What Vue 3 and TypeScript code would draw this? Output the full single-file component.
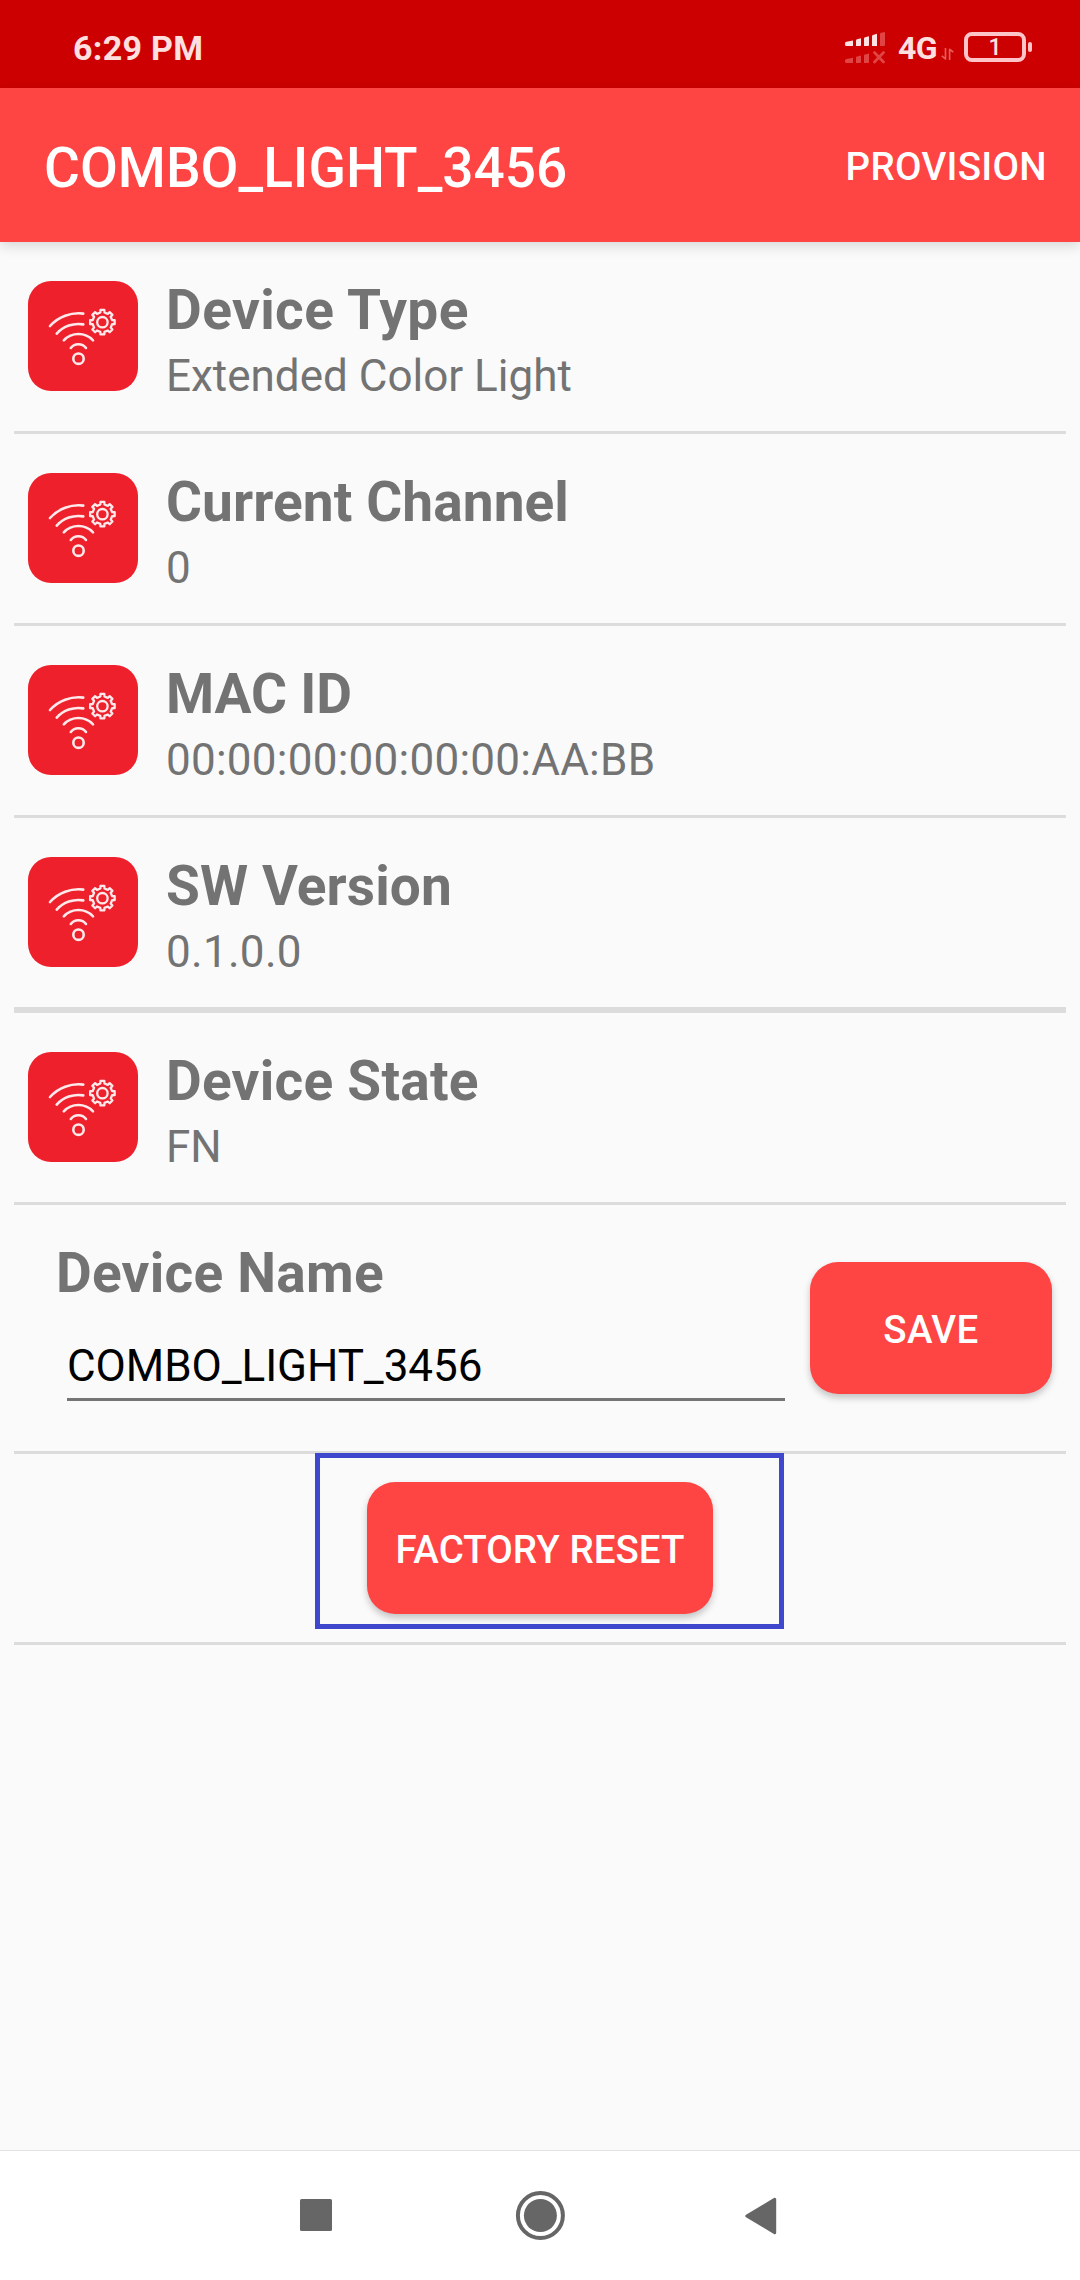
<script setup lang="ts">
import { ref } from 'vue'

interface InfoRow {
  label: string
  value: string
  labelSpacing: number
  valueSpacing: number
  thick?: boolean
}

const rows: InfoRow[] = [
  { label: 'Device Type', value: 'Extended Color Light', labelSpacing: 0.4, valueSpacing: 0 },
  { label: 'Current Channel', value: '0', labelSpacing: 0.1, valueSpacing: 0 },
  { label: 'MAC ID', value: '00:00:00:00:00:00:AA:BB', labelSpacing: -0.1, valueSpacing: 0.25 },
  { label: 'SW Version', value: '0.1.0.0', labelSpacing: 0.1, valueSpacing: 0.3, thick: true },
  { label: 'Device State', value: 'FN', labelSpacing: 0.25, valueSpacing: 0 },
]

const deviceName = ref('COMBO_LIGHT_3456')

// Outline of an eight-toothed gear around (cx, cy).
function gearPath(cx: number, cy: number, inner: number, outer: number): string {
  const points: string[] = []
  for (let i = 0; i < 8; i++) {
    const mid = i * 45
    const corners: [number, number][] = [
      [mid - 12, inner],
      [mid - 9, outer],
      [mid + 9, outer],
      [mid + 12, inner],
    ]
    for (const [deg, r] of corners) {
      const a = (deg * Math.PI) / 180
      points.push(`${(cx + r * Math.cos(a)).toFixed(2)} ${(cy + r * Math.sin(a)).toFixed(2)}`)
    }
  }
  return `M${points.join('L')}Z`
}

const gear = gearPath(74.4, 41.2, 9.9, 12.4)
</script>

<template>
  <div class="screen">
    <div class="status">
      <span class="clock">6:29 PM</span>
      <div class="indicators">
        <svg class="signal" width="40" height="32" viewBox="0 0 40 32">
          <g fill="#ffe3e3">
            <path d="M0 11.5Q0 10 1.500 9.700L8 8.500V14H1.500Q0 14 0 12.500Z" />
            <path d="M11 8.300Q11 7.500 12 7.200L16 6.200V13Q16 14 15 14H11Z" />
            <path d="M19 6.300Q19 5.500 20 5.200L24 4.200V13Q24 14 23 14H19Z" />
            <path d="M27 4Q27 3.200 28 2.900L32 1.800V14H27Z" />
          </g>
          <g fill="#e04444">
            <path d="M35 2Q35 1 36 .8L40 0V13Q40 14 39 14H35Z" />
            <path d="M0 28.500Q0 27.200 1.500 27L8 25.800V31H1.500Q0 31 0 29.500Z" />
            <path d="M11 25.500Q11 24.700 12 24.500L16 23.500V30Q16 31 15 31H11Z" />
            <path d="M19 23.500Q19 22.700 20 22.500L24 21.500V30Q24 31 23 31H19Z" />
          </g>
          <path d="M29.500 20.500L38.500 30M38.500 20.500L29.500 30" stroke="#e04444" stroke-width="2.8" stroke-linecap="round" />
        </svg>
        <span class="network">4G</span>
        <svg class="transfer" width="13" height="14" viewBox="0 0 13 14" fill="none" stroke="#e85c5c" stroke-width="1.700">
          <path d="M4.500 1V12M5 12.300L.8 8.800M8.600 13V2M8.200 2L12.300 5.200" />
        </svg>
        <div class="battery">1</div>
        <i class="nub"></i>
      </div>
    </div>

    <header class="bar">
      <h1>COMBO_LIGHT_3456</h1>
      <span class="action">PROVISION</span>
    </header>

    <main class="content">
      <section v-for="row in rows" :key="row.label" class="row" :class="{ thick: row.thick }">
        <svg class="tile" width="110" height="110" viewBox="0 0 110 110">
          <rect width="110" height="110" rx="23" fill="#ee202c" />
          <g fill="none" stroke="#ffe9ea" stroke-width="2.600" stroke-linecap="round">
            <path d="M22 45A38.700 38.700 0 0 1 55.300 32.600" />
            <path d="M28.700 52.600A28.900 28.900 0 0 1 55.300 43.400" />
            <path d="M35.800 59.400A20 20 0 0 1 65 59.400" />
            <path d="M42.800 67A9.500 9.500 0 0 1 58 67" />
            <circle cx="50.500" cy="77.700" r="5.200" />
            <path :d="gear" stroke-linejoin="round" stroke-width="2.300" />
            <circle cx="74.400" cy="41.200" r="5.200" stroke-width="2.300" />
          </g>
        </svg>
        <div class="texts">
          <div class="label" :style="{ letterSpacing: row.labelSpacing + 'px' }">{{ row.label }}</div>
          <div class="value" :style="{ letterSpacing: row.valueSpacing + 'px' }">{{ row.value }}</div>
        </div>
      </section>

      <section class="row name-row">
        <div class="field">
          <div class="label name-label">Device Name</div>
          <input v-model="deviceName" class="input" type="text" spellcheck="false" />
        </div>
        <button class="btn save">SAVE</button>
      </section>

      <section class="row reset-row">
        <div class="highlight"></div>
        <button class="btn reset">FACTORY RESET</button>
      </section>
    </main>

    <nav class="nav">
      <svg class="recents" width="32" height="32" viewBox="0 0 32 32"><rect width="32" height="32" rx="1.500" fill="#666" /></svg>
      <svg class="home" width="50" height="50" viewBox="0 0 50 50">
        <circle cx="25.400" cy="25.500" r="22.500" fill="none" stroke="#666" stroke-width="4" />
        <circle cx="25.400" cy="25.500" r="16.500" fill="#666" />
      </svg>
      <svg class="back" width="32" height="38" viewBox="0 0 32 38">
        <path d="M1.800 19L29.700 2.300V35.700Z" fill="#666" stroke="#666" stroke-width="3" stroke-linejoin="round" />
      </svg>
    </nav>
  </div>
</template>

<style>
body {
  margin: 0;
}
</style>

<style scoped>
.screen {
  display: flex;
  flex-direction: column;
  width: 1080px;
  height: 2280px;
  overflow: hidden;
  background: #fafafa;
  color: #737373;
  font-family: Roboto, "Liberation Sans", sans-serif;
}
.status {
  display: flex;
  justify-content: space-between;
  height: 88px;
  background: #cc0000;
  color: #ffe0e0;
}
.clock {
  margin: 27px 0 0 73px;
  font-size: 34px;
  line-height: 42px;
  font-weight: 700;
  letter-spacing: 0.3px;
}
.indicators {
  display: flex;
  align-items: flex-start;
  width: 235px;
}
.signal {
  margin-top: 32px;
}
.network {
  width: 39px;
  margin: 29px 0 0 13px;
  font-size: 32px;
  line-height: 38px;
  font-weight: 700;
  letter-spacing: -0.5px;
}
.transfer {
  margin: 47px 0 0 4px;
}
.battery {
  box-sizing: border-box;
  width: 62px;
  height: 30px;
  margin: 32px 0 0 10px;
  border: 4px solid #ffc4c7;
  border-radius: 8px;
  font-size: 23px;
  line-height: 24px;
  font-weight: 500;
  text-align: center;
}
.nub {
  width: 4px;
  height: 10px;
  margin: 42px 0 0 2px;
  border-radius: 2px;
  background: #ffc4c7;
}
.bar {
  display: flex;
  align-items: flex-start;
  justify-content: space-between;
  box-sizing: border-box;
  height: 154px;
  padding: 48px 33px 0 44px;
  background: #ff4444;
  color: #fff;
  box-shadow: 0 4px 12px rgba(0, 0, 0, 0.14);
}
h1 {
  margin: 0;
  font-size: 55px;
  line-height: 64px;
  font-weight: 500;
}
.action {
  margin-top: 8px;
  font-size: 38.5px;
  line-height: 45px;
  font-weight: 500;
  letter-spacing: 0.3px;
}
.content {
  flex: 1;
  padding: 0 14px;
}
.row {
  display: flex;
  box-sizing: border-box;
  height: 192px;
  padding-left: 14px;
  border-bottom: 3px solid #dcdcdc;
}
.row.thick {
  height: 195px;
  border-bottom-width: 6px;
}
.tile {
  margin-top: 39px;
}
.texts {
  margin: 36px 0 0 28px;
}
.label {
  font-size: 55px;
  line-height: 64px;
  font-weight: 700;
}
.name-label {
  letter-spacing: 0.25px;
}
.value {
  margin-top: 8px;
  font-size: 44px;
  line-height: 52px;
}
.name-row {
  height: 249px;
  justify-content: space-between;
  padding: 36px 14px 0 42px;
}
.field {
  width: 729px;
}
.input {
  display: block;
  box-sizing: border-box;
  width: 718px;
  height: 61px;
  margin: 35px 0 0 11px;
  padding: 0 0 6px;
  border: 0;
  border-bottom: 3px solid #757575;
  border-radius: 0;
  outline: 0;
  background: transparent;
  color: #000;
  font: 400 44px/52px Roboto, sans-serif;
  letter-spacing: -0.06px;
}
.btn {
  height: 132px;
  padding: 3px 0 0;
  border: 0;
  border-radius: 28px;
  background: #ff4444;
  color: #fff;
  font: 500 38.5px/45px Roboto, sans-serif;
  white-space: nowrap;
  box-shadow: 0 4px 7px rgba(0, 0, 0, 0.22);
}
.save {
  width: 242px;
  margin-top: 21px;
  letter-spacing: 0.4px;
}
.reset-row {
  position: relative;
  height: 191px;
  justify-content: center;
  padding: 28px 0 0;
}
.reset {
  width: 346px;
  letter-spacing: 0.05px;
}
/* Callout frame lying over the divider above the reset button. */
.highlight {
  position: absolute;
  top: -1px;
  left: 301px;
  box-sizing: border-box;
  width: 469px;
  height: 176px;
  border: 5px solid #3f48cc;
  pointer-events: none;
}
.nav {
  display: flex;
  align-items: flex-start;
  box-sizing: border-box;
  height: 130px;
  padding-left: 300px;
  border-top: 1px solid #e2e2e2;
  background: #fff;
}
.recents {
  margin-top: 48px;
}
.home {
  margin: 39px 0 0 183px;
}
.back {
  margin: 46px 0 0 180px;
}
</style>
